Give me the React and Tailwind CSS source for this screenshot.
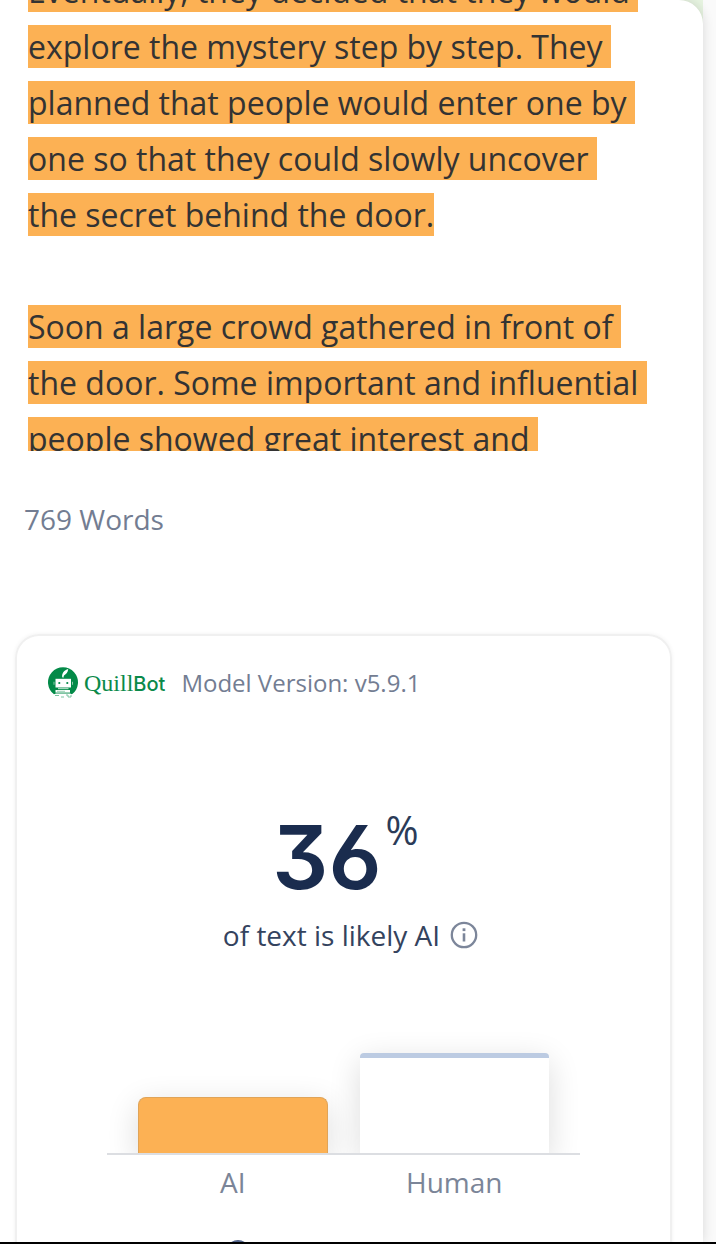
import React from 'react';

const paragraphs = [
  'Eventually, they decided that they would explore the mystery step by step. They planned that people would enter one by one so that they could slowly uncover the secret behind the door.',
  'Soon a large crowd gathered in front of the door. Some important and influential people showed great interest and',
];

const bars = [
  { label: 'AI', height: 58, className: 'rounded-t-lg border border-b-0 border-[#e0a458] bg-[#fcb154]' },
  { label: 'Human', height: 102, className: 'rounded-t-sm border-t-[5px] border-t-[#bccbe2] bg-white' },
];

const QuillBotLogo = () => (
  <div className="flex items-center gap-[5px] text-[#0b8a4a]">
    <svg viewBox="0 0 32 32" className="w-8 h-8" aria-hidden="true">
      <path d="M7 27.300A15 15 0 1 1 25 27.300L23 26.500H9z" fill="#038a48" />
      <path d="M15.200 10c-.6-3.500 2-7 6-8-.2 3.500-2 5-4.200 6.500L16.200 11z" fill="#fff" />
      <path d="M8.500 11.800h15.500v8.700H8.500z" fill="#fff" />
      <path d="M6.500 14.800h1v3h-1zM25 14.800h1v3h-1z" fill="#8ccbab" />
      <circle cx="12.300" cy="16" r="1.100" fill="#038a48" />
      <circle cx="20.300" cy="16" r="1.100" fill="#038a48" />
      <path d="M11 20.800h10.500v1.400H11z" fill="#a5d6bd" />
      <path d="M8.500 23h14.500v2.600H8.500z" fill="#fff" />
      <path d="M10 24.300h8" stroke="#7cc3a0" strokeWidth=".8" />
      <path d="M8 28.500h4M14 30h3M19 28h2v2h3v-2" stroke="#7cc3a0" strokeWidth="1" fill="none" />
    </svg>
    <span className="text-2xl leading-8">
      <span className="font-['Liberation_Serif',serif]">Quill</span>
      <span className="font-['Inter',sans-serif] font-medium text-xl">Bot</span>
    </span>
  </div>
);

const InfoIcon = () => (
  <svg viewBox="0 0 28 28" className="w-7 h-7" fill="none" stroke="currentColor" aria-hidden="true">
    <circle cx="14" cy="14" r="12.200" strokeWidth="2.300" />
    <path d="M14 12.300v8.200" strokeWidth="2.600" />
    <path d="M14 7.300v2.800" strokeWidth="2.800" />
  </svg>
);

const BarChart = () => (
  <div className="mx-[90px]">
    <div className="grid grid-cols-2 items-end gap-8 px-[31px] pt-10 border-b-2 border-[#dcdee2] overflow-hidden">
      {bars.map((bar) => (
        <div
          key={bar.label}
          className={`-mb-0.5 shadow-[0_8px_32px_rgba(0,0,0,0.14)] ${bar.className}`}
          style={{ height: bar.height }}
        />
      ))}
    </div>
    <div className="grid grid-cols-2 gap-8 px-[31px] mt-[7px] text-[28px] leading-10 text-[#7b8598] text-center">
      {bars.map((bar) => (
        <div key={bar.label}>{bar.label}</div>
      ))}
    </div>
  </div>
);

const ResultCard = () => (
  <section className="ml-[15px] mr-[31px] mt-[95px] pt-[30px] rounded-t-3xl border-2 border-b-0 border-[#f0f0f0] shadow-[0_0_4px_rgba(0,0,0,0.06)]">
    <div className="flex items-center gap-4 pl-[30px]">
      <QuillBotLogo />
      <span className="text-2xl text-[#737d92]">Model Version: v5.9.1</span>
    </div>

    <div className="flex justify-center items-start gap-1 mt-[106px] pl-1 text-[#1a2c4e]">
      <span className="font-['Inter',sans-serif] font-semibold text-[88px] leading-[104px] [font-feature-settings:'cv03','cv09']">36</span>
      <span className="text-[40px] leading-[50px] text-[#2b3b58]">%</span>
    </div>

    <div className="flex justify-center items-center gap-[10px] mt-[6px] pl-[14px] text-[28px] leading-10 text-[#34435e]">
      of text is likely AI
      <button type="button" aria-label="More info" className="text-[#7c869a]">
        <InfoIcon />
      </button>
    </div>

    <div className="mt-[58px]">
      <BarChart />
    </div>
    <div className="mt-[38px] ml-[209px] w-6 h-6 rounded-full border-2 border-[#52648a]" />
  </section>
);

const App = () => {
  return (
    <div className="h-screen flex flex-col bg-[#fafafa] font-['Open_Sans',sans-serif] overflow-hidden">
      <div className="flex-1 min-h-0 mr-[13px] bg-[#e7f4e1]">
        <main className="h-full bg-white rounded-tr-[24px] shadow-[0_0_12px_rgba(0,0,0,0.14)]">
          <div className="h-full overflow-hidden">
            <div className="h-[451px] pl-7 pr-[62px] overflow-hidden">
              <p className="-mt-[37px] text-[32px] leading-[56px] text-[#333] whitespace-pre-wrap">
                <span className="bg-[#fcb154]">{paragraphs[0]}</span>
                {'\n\n'}
                <span className="bg-[#fcb154]">{paragraphs[1]} </span>
              </p>
            </div>
            <p className="mt-12 ml-6 text-[28px] leading-10 text-[#737d92]">769 Words</p>
            <ResultCard />
          </div>
        </main>
      </div>
      <div className="h-0.5 bg-black" />
    </div>
  );
};

export default App;
